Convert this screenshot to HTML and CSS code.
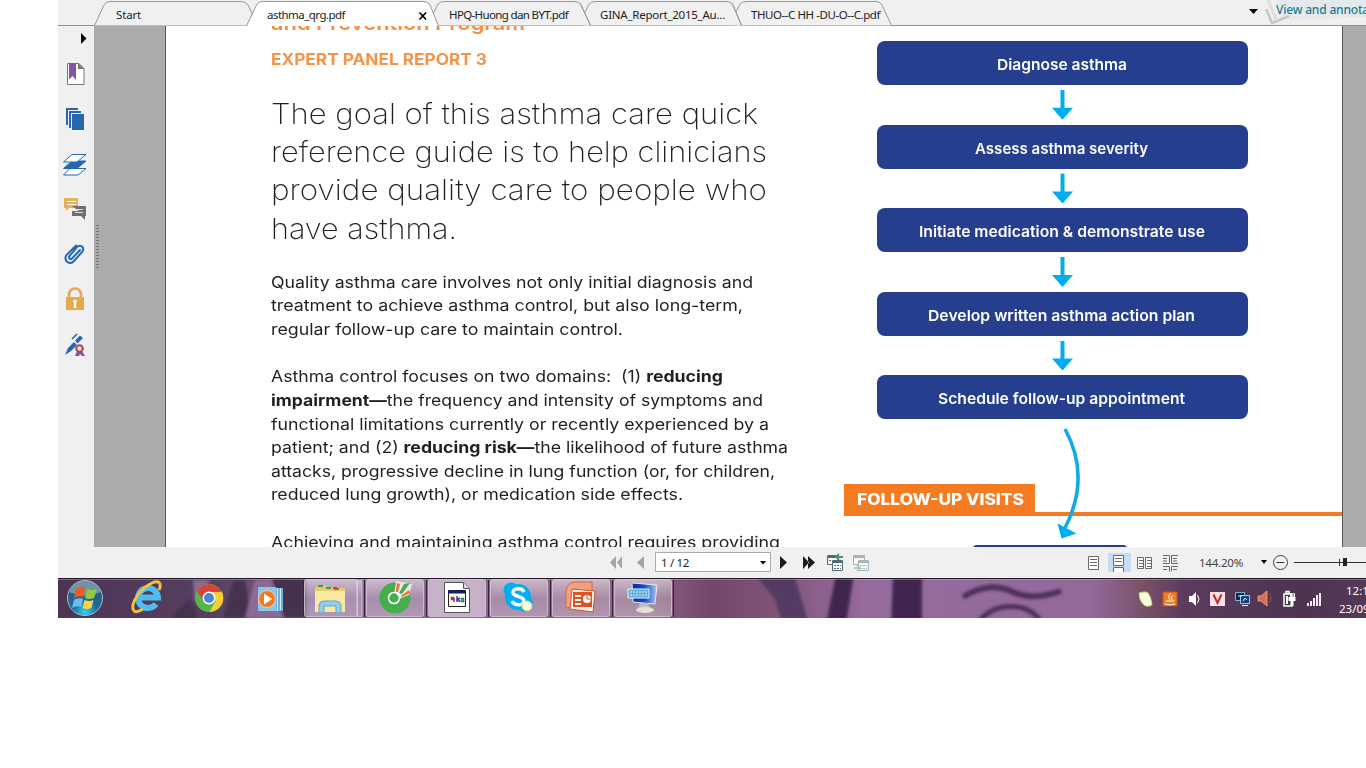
FILE: index.html
```html
<!DOCTYPE html>
<html lang="en">
<head>
<meta charset="utf-8">
<title>asthma_qrg.pdf</title>
<link rel="stylesheet" href="styles.css">
</head>
<body>
<div class="app">
  <header class="tabs">
    <svg class="tabs-shape" width="1308" height="26" viewBox="58 0 1308 26">
      <path d="M58 25.5H1366" stroke="#8e918e"/>
      <g fill="#f0f0f0" stroke="#969996">
        <path d="M735 25.5V14L740 4Q742 1.500 747 1.500H876Q880 1.500 882 5L891.500 25.500"/>
        <path d="M584 25.500V14L589 4Q591 1.500 596 1.500H727Q731 1.500 733 5L741.500 25.500"/>
        <path d="M433 25.500V14L438 4Q440 1.500 445 1.500H575Q579 1.500 581 5L590.500 25.500"/>
        <path d="M94.500 25.500L104 5Q106 1.500 110 1.500H241Q246 1.500 248 5L252 13V25.500"/>
      </g>
      <path d="M735 14.500V25M584 14.500V25M433 14.500V25" stroke="#f0f0f0" stroke-width="2"/>
      <path d="M732 3L741.500 25.500M580 3L590.500 25.500" stroke="#969996" fill="none"/>
      <path d="M246.500 26L256 6Q258 1.500 263 1.500H424Q428 1.500 430 5L438.500 26" fill="#fff" stroke="#969996"/>
      <path d="M419.500 12.500l6.500 7m0-7l-6.500 7" stroke="#000" stroke-width="1.700"/>
      <path d="M1249 9h9l-4.500 5z" fill="#000"/>
      <path d="M1264 0H1366V25H1275z" fill="#efefef"/>
      <path d="M1277 0H1366V17L1280 20z" fill="#e4eaec"/>
      <path d="M1266 9L1272 23L1289 16" fill="none" stroke="#c6c7c7" stroke-width="2.500"/>
      <path d="M1268 0L1276 19" stroke="#dcdddd" stroke-width="3"/>
    </svg>
    <div class="tab t1"><span data-w="25">Start</span></div>
    <div class="tab t2"><span data-w="78">asthma_qrg.pdf</span></div>
    <div class="tab t3"><span data-w="119">HPQ-Huong dan BYT.pdf</span></div>
    <div class="tab t4"><span data-w="125">GINA_Report_2015_Au...</span></div>
    <div class="tab t5"><span data-w="129">THUO--C HH -DU-O--C.pdf</span></div>
    <div class="banner"><span data-w="93">View and annota</span></div>
  </header>

  <main class="work">
    <nav class="side">
      <svg width="36" height="345" viewBox="58 26 36 345">
        <path d="M81 33v11l5.500-5.500z" fill="#000"/>
        <g>
          <path d="M67.500 63.500H79l5 5V84.500H67.500z" fill="#fff" stroke="#777"/>
          <path d="M78 63l6.500 6H78z" fill="#777"/>
          <path d="M69 63h7v17l-3.500-4-3.500 3.500z" fill="#8455a4"/>
        </g>
        <g fill="#2568b0">
          <path d="M66 108h12v2H68v15h-2zM69 111h12v2H71v15h-2zM72 114h12v16H72z"/>
        </g>
        <g stroke="#2568b0" stroke-width="1">
          <path d="M70 168.500h16l-8 6.500H63.500z" fill="#fff"/>
          <path d="M72 161h14l-9 7.500H63.500z" fill="#2568b0"/>
          <path d="M72 154.500h14l-9 7.500H63.500z" fill="#fff"/>
        </g>
        <path d="M64 198h14v10H69l-3 3v-3h-2z" fill="#e5b05c"/>
        <path d="M67 201.500h9M67 204.500h9" stroke="#fff"/>
        <path d="M72 206h14v10h-1v4l-4-4H72v-5h7z" fill="#6f6f6f"/>
        <path d="M75 209.500h8M75 212.500h8" stroke="#ddd"/>
        <path d="M80 250l-8 8.500c-1.500 1.500-4 0-2.500-2.500l7.500-9c3-3 8 0 5.500 4.500L74 261c-4 4.500-11 0-7.500-6L76 245.500" fill="none" stroke="#2568b0" stroke-width="2" stroke-linecap="round"/>
        <path d="M69 299v-4.500a6 6 0 0 1 12 0v4.500" fill="none" stroke="#e5a84e" stroke-width="2.600"/>
        <path d="M66 297h18v13H66z" fill="#e5a84e"/>
        <path d="M75 299.500a2 2 0 0 1 1.200 3.500v5h-2.400v-5a2 2 0 0 1 1.200-3.500z" fill="#fff"/>
        <path d="M65 355l3-7 6-6 3 3-6 6zM75 340.500l5-5 3 2.500-5.500 5.500z" fill="#2568b0"/>
        <path d="M72 339l5-5" stroke="#2568b0" stroke-width="1.600"/>
        <path d="M77 351l-2 5h3l1 0 1-2 2 2h3l-3-5" fill="#8455a4"/>
        <circle cx="79.500" cy="348.500" r="3.300" fill="#f4d9cf" stroke="#a04a58" stroke-width="2"/>
      </svg>
    </nav>
    <div class="gutter"><div class="grip"></div></div>
    <article class="page">
      <section class="copy">
        <div class="program"><span data-w="254">and Prevention Program</span></div>
        <div class="report"><span data-w="216">EXPERT PANEL REPORT 3</span></div>
        <div class="goal">
          <div><span data-w="487">The goal of this asthma care quick</span></div>
          <div><span data-w="496">reference guide is to help clinicians</span></div>
          <div><span data-w="496">provide quality care to people who</span></div>
          <div><span data-w="186">have asthma.</span></div>
        </div>
        <div class="body">
          <div><span data-w="482">Quality asthma care involves not only initial diagnosis and</span></div>
          <div><span data-w="472">treatment to achieve asthma control, but also long-term,</span></div>
          <div><span data-w="352">regular follow-up care to maintain control.</span></div>
        </div>
        <div class="body second">
          <div><span data-w="452">Asthma control focuses on two domains:&nbsp; (1) <b>reducing</b></span></div>
          <div><span data-w="492"><b>impairment—</b>the frequency and intensity of symptoms and</span></div>
          <div><span data-w="498">functional limitations currently or recently experienced by a</span></div>
          <div><span data-w="517">patient; and (2) <b>reducing risk—</b>the likelihood of future asthma</span></div>
          <div><span data-w="504">attacks, progressive decline in lung function (or, for children,</span></div>
          <div><span data-w="412">reduced lung growth), or medication side effects.</span></div>
        </div>
        <div class="body second">
          <div><span data-w="509">Achieving and maintaining asthma control requires providing</span></div>
        </div>
      </section>
      <section class="flow">
        <div class="step"><span data-w="130">Diagnose asthma</span></div>
        <div class="arrow"></div>
        <div class="step"><span data-w="173">Assess asthma severity</span></div>
        <div class="arrow"></div>
        <div class="step"><span data-w="286">Initiate medication &amp; demonstrate use</span></div>
        <div class="arrow"></div>
        <div class="step"><span data-w="267">Develop written asthma action plan</span></div>
        <div class="arrow"></div>
        <div class="step"><span data-w="247">Schedule follow-up appointment</span></div>
        <div class="visits"><div class="visits-label"><span data-w="167">FOLLOW-UP VISITS</span></div></div>
        <div class="next"></div>
        <svg class="curve" width="40" height="120" viewBox="1050 424 40 120">
          <path d="M1065 429C1081 458 1084 492 1064 530" fill="none" stroke="#12abe3" stroke-width="3.600"/>
          <path d="M1057.500 523.500L1076.500 533.500L1061.500 538.500z" fill="#00adef"/>
        </svg>
      </section>
    </article>
  </main>

  <footer class="status">
    <svg class="status-icons" width="1308" height="31" viewBox="58 547 1308 31">
      <path d="M616 556v13l-6-6.500zM622 556v13l-5-6.500zM644 556v13l-7-6.500z" fill="#a5a5a5"/>
      <path d="M655.500 552.500h115v19h-115z" fill="#fff" stroke="#a9abad"/>
      <path d="M760 561h6l-3 3.500z" fill="#000"/>
      <path d="M780 556v13l7-6.500zM803 556l6 6.500-6 6.500zM808 556v13l7-6.500z" fill="#1c1c1c"/>
      <g fill="#fff" stroke="#526a72"><path d="M827.500 555.500h11v9h-11z"/><path d="M832.500 560.500h10v10h-10z"/><path d="M827 557h11M832 562h11" stroke-width="2"/><path d="M834 565.500h7M834 568.500h7M829 560.500h3" stroke-dasharray="2 1"/></g>
      <path d="M843 557h-7m3-3l-3 3 3 3" fill="none" stroke="#40977b" stroke-width="1.800"/>
      <g fill="#f7f7f7" stroke="#a9b5ba"><path d="M853.500 555.500h11v9h-11z"/><path d="M858.500 560.500h10v10h-10z"/><path d="M853 557h11M858 562h11" stroke-width="2"/><path d="M860 565.500h7M860 568.500h7" stroke-dasharray="2 1"/></g>
      <path d="M854 568h5m-2-3l3 3-3 3" fill="none" stroke="#9bc9b4" stroke-width="1.500"/>
      <path d="M1108 553h23v19h-23z" fill="#c8ddf5"/>
      <g fill="#fff" stroke="#696969">
        <path d="M1088.500 556.500h10v13h-10zM1113.500 555.500h10v10h-10zM1113.500 572v-4.500h10v4.500M1137.500 557.500h6v11h-6zM1145.500 557.500h6v11h-6z"/>
        <path fill="none" d="M1090 559.500h7M1090 562.500h7M1090 565.500h7M1115 558.500h7M1115 561.500h7M1139 560.500h4M1139 563.500h4M1139 566.500h4M1147 560.500h4M1147 563.500h4M1147 566.500h4M1163 555.500h6.500v8h-6.500M1163 558.500h4M1163 561h4M1178 555.500h-6.500v8h6.500M1173 558.500h4M1173 561h4M1163 566.500h6.500v5M1178 566.500h-6.500v5M1163 569.500h4M1173 569.500h4"/>
      </g>
      <path d="M1261 560h6l-3 4z" fill="#000"/>
      <circle cx="1280.500" cy="562.500" r="7" fill="none" stroke="#444"/>
      <path d="M1276.500 562.500h8M1294 562.500h72M1339.500 559v7" stroke="#333"/>
      <path d="M1343 558h4v8h-4z" fill="#222"/>
    </svg>
    <div class="pageno"><span data-w="28">1 / 12</span></div>
    <div class="zoom"><span data-w="44">144.20%</span></div>
  </footer>

  <div class="taskbar">
    <svg width="1308" height="40" viewBox="58 578 1308 40">
      <defs>
        <linearGradient id="wall" x1="0" x2="1" y1="0" y2="0">
          <stop offset="0" stop-color="#4d3455"/><stop offset=".12" stop-color="#56405f"/><stop offset=".2" stop-color="#8b6995"/><stop offset=".45" stop-color="#8b6382"/><stop offset=".5" stop-color="#73466c"/><stop offset=".55" stop-color="#805578"/><stop offset=".62" stop-color="#966b9e"/><stop offset=".79" stop-color="#93699a"/><stop offset=".83" stop-color="#795067"/><stop offset=".86" stop-color="#5b3c5f"/><stop offset=".95" stop-color="#4c344e"/><stop offset="1" stop-color="#533956"/>
        </linearGradient>
        <linearGradient id="btn" x1="0" y1="0" x2="0" y2="1"><stop offset="0" stop-color="#fff" stop-opacity=".55"/><stop offset=".5" stop-color="#fff" stop-opacity=".25"/><stop offset="1" stop-color="#fff" stop-opacity=".32"/></linearGradient>
        <radialGradient id="orb" cx=".5" cy=".9" r=".85"><stop offset="0" stop-color="#36d5f5"/><stop offset=".4" stop-color="#176e9c"/><stop offset="1" stop-color="#35566e"/></radialGradient>
        <linearGradient id="scr"><stop offset="0" stop-color="#0b2ba4"/><stop offset=".5" stop-color="#1748d0"/><stop offset="1" stop-color="#a8ccf4"/></linearGradient>
        <filter id="soft" x="-20%" y="-30%" width="140%" height="160%"><feGaussianBlur stdDeviation="1.600"/></filter>
      </defs>
      <path d="M58 578h1308v40H58z" fill="url(#wall)"/>
      <g filter="url(#soft)">
        <path d="M170 618l20-20 8 20zM245 580h-12l-10 38h28zM272 578h34v40h-22z" fill="#44304f"/>
        <path d="M193 580h18l-16 22zM255 580h16l12 38h-38z" fill="#8c6a96"/>
        <path d="M755 574h39l15 50h-26l-8-24z" fill="#523a64"/>
        <path d="M836 574h18l-8 50h-20zM893 574h29v50h-31z" fill="#402850"/>
        <path d="M963 597c20-12 34-12 50-5s34 4 48-1" fill="none" stroke="#4c325a" stroke-width="6"/>
        <path d="M980 620c16-18 46-18 60 0" fill="none" stroke="#4c325a" stroke-width="5"/>
      </g>
      <path d="M58 578.500h1308" stroke="#25182a"/>
      <path d="M58 579.500h1308" stroke="#d0b9d3" opacity=".4"/>

      <g fill="url(#btn)" stroke="#dac9df" stroke-opacity=".8">
        <path d="M357 580.500h5v36h-5z"/>
        <rect x="304.500" y="579.500" width="53" height="37" rx="2"/>
        <rect x="366.500" y="579.500" width="57" height="37" rx="2"/>
        <rect x="428.500" y="579.500" width="57" height="37" rx="2" fill="#eee5f0" fill-opacity=".6"/>
        <rect x="490.500" y="579.500" width="57" height="37" rx="2"/>
        <rect x="552.500" y="579.500" width="57" height="37" rx="2"/>
        <rect x="614.500" y="579.500" width="57" height="37" rx="2"/>
      </g>
      <path d="M303.500 580v37M364.500 580v37M426.500 580v37M488.500 580v37M550.500 580v37M612.500 580v37M673.500 580v37" stroke="#34223a"/>

      <circle cx="85" cy="598" r="17.500" fill="url(#orb)" stroke="#98c2d4"/>
      <path d="M69 592a17 17 0 0 1 32 0q-16 7-32 0" fill="#d6e6ec" opacity=".4"/>
      <path d="M76 589q5-4 9-1l-2 9q-4-2-9 1z" fill="#ef5b25"/>
      <path d="M87 589q4 2 10 0l-3 9q-5 2-9 0z" fill="#92c83e"/>
      <path d="M74 600q4-3 9-1l-2 8q-4-2-9 1z" fill="#6bbdf0"/>
      <path d="M84.500 600q5 2 9 0l-2 8q-5 2-9 0z" fill="#fbd34a"/>

      <path d="M156 604a10 10 0 1 1 2-6.500H140" fill="none" stroke="#4dbdf0" stroke-width="6"/>
      <path d="M134 611c-5-7 7-23 18-28 7-3 10 0 7 7M134 611q3 2 9-2" fill="none" stroke="#f4c13d" stroke-width="3"/>

      <circle cx="209" cy="598" r="14" fill="#55b64c"/>
      <path d="M209 591h12.500a14 14 0 0 1-12 21l6-11z" fill="#f8cf38"/>
      <path d="M197 591l7 11 5-10h12.500a14 14 0 0 0-24.500-1" fill="#da4336"/>
      <circle cx="209" cy="598" r="6.500" fill="#fff"/><circle cx="209" cy="598" r="5" fill="#4688d5"/>

      <path d="M270 588h13v23h-13z" fill="#6baedb"/><path d="M258 587h18v24h-18z" fill="#8cc5ea"/><path d="M277.500 588v23M280.500 588v22" stroke="#d8effc"/>
      <circle cx="267" cy="599" r="8.500" fill="#ef7a24" stroke="#f8ceb0"/><path d="M264 593.500v11l8-5.500z" fill="#fff"/>

      <path d="M315 588l3-3h8l3 3h16v24h-30z" fill="#e8ca69"/>
      <path d="M315 591h30v21h-30z" fill="#f9e8a0"/>
      <path d="M318 586h5M326 588h5M334 589h5" stroke="#3d9c55" stroke-width="2"/><path d="M333 588h4" stroke="#c34e36" stroke-width="2"/>
      <path d="M319 613v-8q1-4 5-4h12q4 0 5 4v8h-5v-7h-12v7z" fill="#92cdec" stroke="#62a4cb"/>

      <circle cx="395" cy="598" r="15.500" fill="#45ad4c"/>
      <path d="M394 596L396 581L412 584L409 595L399 599z" fill="#ede6ec"/>
      <path d="M396 592l1-9 3 1-2 8z" fill="#ed6f31"/><path d="M399 593l5-9 6-1-8 11z" fill="#4aae4d"/><path d="M401 596l8-6 1 3-8 4z" fill="#ed6f31"/>
      <circle cx="394" cy="598" r="5.500" fill="#45ad4c" stroke="#fff" stroke-width="1.600"/>

      <path d="M444.500 582.500h19l6 6v24h-25z" fill="#fff" stroke="#555"/><path d="M463.500 582.500v6h6" fill="#ddd" stroke="#555"/>
      <path d="M448.500 590.500h17v16h-17z" fill="#fff" stroke="#222"/><path d="M448 592h18" stroke="#151c5c" stroke-width="3"/>
      <g fill="none" stroke-width="1.500"><path d="M451.500 597.500h2v2h-2zM454 598v4" stroke="#a62c52"/><path d="M457 596v6m3-4l-2 1 2 3" stroke="#2f3ba7"/><path d="M461.500 598.500h2v3h-2z" stroke="#21844c"/></g>

      <circle cx="518" cy="597" r="13" fill="#00aff0"/><circle cx="511" cy="590" r="7.500" fill="#00aff0"/><circle cx="525" cy="604" r="8" fill="#00aff0"/>
      <path d="M524 592c-2-5-12-4-11 1 1 4 11 3 11 8 0 5-10 5-12 0" fill="none" stroke="#fff" stroke-width="3.400"/>
      <circle cx="527" cy="606" r="5" fill="#fbfbe8" stroke="#cfe46c"/>

      <path d="M566 608v-17q1-8 8-9h18v20z" fill="#f1a183" stroke="#d86640"/><path d="M572 589l23 2-2 21-23-3z" fill="#fff0e8" stroke="#d45126"/>
      <path d="M573 592h19v15h-19z" fill="#df5127"/><path d="M575 596h6M575 600h6M575 604h6" stroke="#fff" stroke-width="2"/><circle cx="587" cy="599" r="4" fill="#fff"/><path d="M587 599v-4m0 4h4" stroke="#df5127"/>

      <path d="M632 583l25 2-2 19-22-2z" fill="url(#scr)" stroke="#e5e8ec"/><path d="M640 603h8l2 5h-12z" fill="#bfc0bc"/><ellipse cx="645" cy="610" rx="9" ry="3" fill="#e4e2d8"/>
      <path d="M628 589h21v9h-21z" fill="#5cadd9" stroke="#e5f5fa"/><path d="M630 592h17M630 595h17" stroke="#e5f5fa" stroke-dasharray="2 1"/>

      <path d="M1139 593q7-2 9 0 3 3 4 12-6 3-9-1-4-4-4-11z" fill="#f7ffe5" stroke="#b3dc5b"/>
      <path d="M1163 592h14v14h-14z" fill="#ef7d26" stroke="#c65118"/><path d="M1171 593q-4 3-1 7m3-5q-3 2-1 5M1166 601h8M1165 604q5 2 10 0" fill="none" stroke="#fff"/>
      <path d="M1189 596h3l4-4v14l-4-4h-3z" fill="#fff"/><path d="M1197.500 595q3 4 0 8" fill="none" stroke="#fff"/>
      <path d="M1210 592h15v14h-15z" fill="#f8e1e5"/><path d="M1213.500 594.500l4 8.500 4-8.500" fill="none" stroke="#bf2638" stroke-width="2"/>
      <path d="M1235.500 592.500h9v8h-9z" fill="#0b2949" stroke="#7ab5d6"/><path d="M1240.500 595.500h9v8h-9z" fill="#12407a" stroke="#9ccae6"/><path d="M1238 596h4M1243 601l2-3 2 2M1242 605.500h6" fill="none" stroke="#e4f2fc"/>
      <path d="M1258 596h3l6-5v15l-6-5h-3z" fill="#d96e50" stroke="#f5b49d" stroke-width=".7"/><path d="M1269 593q4 5 0 10" fill="none" stroke="#aa4c3c"/>
      <path d="M1284 594h8v12h-8zM1286 591.500h3v2h-3z" fill="none" stroke="#fff" stroke-width="1.500"/><path d="M1286 596h2v8h-2zM1288.500 597h7v4h-2v5h-3v-5h-2zM1290 593h1.500v4h-1.500zM1293.500 593h1.500v4h-1.500z" fill="#fff"/>
      <path d="M1307 603h2v3h-2zM1310 601h2v5h-2zM1313 598h2v8h-2zM1316 595h2v11h-2zM1319 593h2v13h-2z" fill="#f3eef3"/>
    </svg>
    <div class="clock"><div class="time">12:15 PM</div><div>23/09/2015</div></div>
  </div>
</div>
<script src="fit.js"></script>
</body>
</html>
```
FILE: styles.css
```css
* { box-sizing: border-box; }
body { margin: 0; background: #fff; overflow: hidden; font-family: Inter, sans-serif; }
svg { display: block; }
[data-w] { display: inline-block; white-space: pre; transform-origin: 0 50%; }
.app { width: 1308px; height: 618px; margin-left: 58px; overflow: hidden; display: flex; flex-direction: column; background: #f0f0f0; }

.tabs { position: relative; height: 26px; flex: none; display: flex; font: 11.5px/30px "Noto Sans", sans-serif; color: #222; overflow: hidden; }
.tabs-shape { position: absolute; left: 0; top: 0; }
.tab, .banner { position: relative; flex: none; }
.t1 { margin-left: 58px; width: 151px; }
.t2 { width: 182px; }
.t3 { width: 151px; }
.t4 { width: 151px; }
.t5 { width: 525px; }
.banner { color: #24798e; line-height: 20px; font-size: 12px; font-weight: 500; }

.work { height: 521px; flex: none; display: flex; overflow: hidden; background: #ababab; }
.side { width: 36px; background: #f0f0f0; flex: none; }
.gutter { width: 71px; flex: none; padding: 199px 0 0 2px; }
.grip { width: 3px; height: 45px; background: repeating-linear-gradient(#777 0 1px, transparent 1px 3px); }
.page { width: 1178px; height: 521px; flex: none; background: #fff; border: solid #555; border-width: 0 1px; display: flex; overflow: hidden; }

.copy { width: 678px; padding-left: 105px; flex: none; color: #231f20; }
.program { height: 22px; font-size: 20px; line-height: 24px; margin-top: -15px; font-weight: 600; color: #f58d45; }
.report { margin-top: 15px; height: 24px; font-size: 15.500px; line-height: 24px; font-weight: 700; color: #f79346; }
.goal { margin-top: 22.800px; height: 153.300px; font-size: 28px; line-height: 38.330px; font-weight: 250; }
.goal > div { height: 38.330px; }
.body { margin-top: 22.800px; font-size: 16px; line-height: 23.540px; }
.body > div { height: 23.540px; }
.second { margin-top: 24px; }

.flow { width: 498px; position: relative; padding-top: 15px; flex: none; }
.step { width: 371px; height: 44px; margin-left: 33px; border-radius: 8px; background: #253e8d; color: #fff; font-size: 15px; font-weight: 600; line-height: 47px; display: flex; justify-content: center; padding-right: 2px; }
.arrow { width: 21px; height: 30px; margin: 4.800px 0 4.800px 208px; background: #00adef; clip-path: polygon(8.500px 0, 12.500px 0, 12.500px 18px, 21px 18px, 10.500px 30px, 0 18px, 8.500px 18px); }
.visits { margin-top: 65px; height: 32px; border-bottom: 4px solid #f47b20; }
.visits-label { width: 191px; height: 32px; background: #f47b20; color: #fff; font-size: 15.500px; font-weight: 800; line-height: 31px; padding-left: 13px; }
.next { width: 156px; height: 10px; margin: 29px 0 0 128px; border-radius: 8px; background: #253e8d; }
.curve { position: absolute; left: 206px; top: 398px; }

.status { position: relative; height: 31px; flex: none; display: flex; background: #f0f0f0; font: 11.5px/31px "Noto Sans", sans-serif; color: #222; }
.status-icons { position: absolute; left: 0; top: 0; }
.pageno { position: relative; margin-left: 603px; width: 538px; }
.zoom { position: relative; color: #444; }

.taskbar { position: relative; height: 40px; flex: none; }
.clock { position: absolute; left: 1281px; top: 4px; font: 11.5px/17.500px "Noto Sans", sans-serif; color: #fff; white-space: nowrap; }
.time { padding-left: 7px; }
```
FILE: fit.js
```js
// Sets each line to its measure: page copy is widened, interface text is tracked.
document.querySelectorAll('[data-w]').forEach(function (el) {
  var measure = Number(el.dataset.w);
  var natural = el.getBoundingClientRect().width;
  if (el.closest('.page')) {
    el.style.width = measure + 'px';
    var stretch = measure / natural;
    el.style.width = natural + 'px';
    el.style.marginRight = (measure - natural) + 'px';
    el.style.transform = 'scaleX(' + stretch + ')';
  } else {
    el.style.letterSpacing = ((measure - natural) / el.textContent.length) + 'px';
  }
});
```
